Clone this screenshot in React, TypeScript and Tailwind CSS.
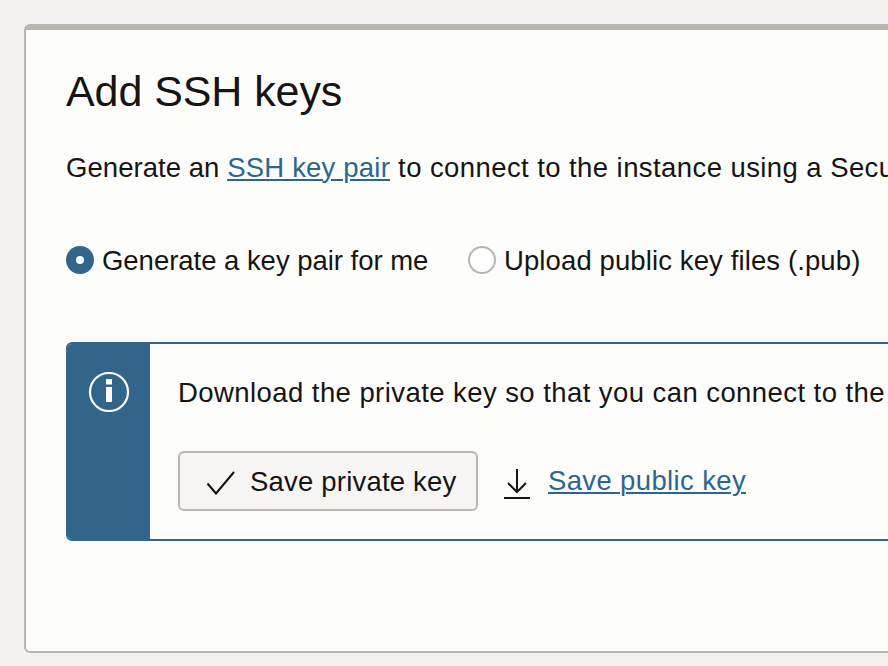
export default function App() {
  return (
    <div className="h-[666px] w-[888px] overflow-hidden bg-[#f3f1f0] pt-6 pl-6 font-['Liberation_Sans',sans-serif] text-[#161513]">
      <main className="h-[629px] w-[1100px] rounded-[6px] border-2 border-t-[6px] border-[#bbb5af] bg-[#fdfdfb] pl-10">
        <h1 className="pt-9 text-[43px] leading-[50px] tracking-[-0.08px] whitespace-nowrap">Add SSH keys</h1>
        <p className="mt-8 text-[27.5px] leading-[40px] whitespace-nowrap">
          <span className="tracking-[0.05px]">Generate an </span>
          <a className="tracking-[0.2px] text-[#2c6690] underline decoration-2 underline-offset-2">SSH key pair</a>
          <span className="tracking-[0.42px]"> to connect to the instance using a Secure</span>
        </p>
        <div className="mt-[52px] flex h-10 items-center text-[27.5px] whitespace-nowrap">
          <label className="flex w-[402px] items-center gap-2">
            <span className="flex size-7 items-center justify-center rounded-full bg-[#31658a]"><span className="size-2 rounded-full bg-white" /></span>
            <span className="relative top-px tracking-[-0.03px]">Generate a key pair for me</span>
          </label>
          <label className="flex items-center gap-2">
            <span className="size-7 rounded-full border-2 border-[#bbb5af] bg-white" />
            <span className="relative top-px tracking-[0.11px]">Upload public key files (.pub)</span>
          </label>
        </div>
        <section className="mt-[62px] flex h-[199px] w-[1000px] overflow-hidden rounded-[6px] border-2 border-[#31658a]">
          <aside className="flex w-[82px] shrink-0 justify-center bg-[#31658a] pt-[27px]">
            <svg width="42" height="42" viewBox="0 0 42 42" fill="none"><circle cx="21" cy="21" r="19" stroke="white" strokeWidth="2.2" /><path d="M18 8h6v5.5h-6zM18 16h6v15h-6z" fill="white" /></svg>
          </aside>
          <div className="pt-[29px] pl-7">
            <p className="text-[27.5px] leading-[40px] tracking-[0.43px] whitespace-nowrap">Download the private key so that you can connect to the</p>
            <div className="mt-[38px] flex h-[60px] items-center text-[27.5px] whitespace-nowrap">
              <button className="flex h-[60px] w-[300px] items-center rounded-[6px] border-2 border-[#bbb5af] bg-[#f7f6f5] pl-[26px]">
                <svg className="mr-[14px]" width="30" height="28" viewBox="0 0 30 28" fill="none" stroke="#161513" strokeWidth="2.1"><path d="M1.5 16.5l8.5 10L28 5" /></svg>
                <span className="relative top-px tracking-[0.2px]">Save private key</span>
              </button>
              <svg className="ml-[26px]" width="26" height="36" viewBox="0 0 26 36" fill="none" stroke="#161513" strokeWidth="2"><path d="M13 6v23M4 20l9 9 9-9M0 35h26" /></svg>
              <a className="ml-[18px] tracking-[0.36px] text-[#2c6690] underline decoration-2 underline-offset-2">Save public key</a>
            </div>
          </div>
        </section>
      </main>
    </div>
  );
}
